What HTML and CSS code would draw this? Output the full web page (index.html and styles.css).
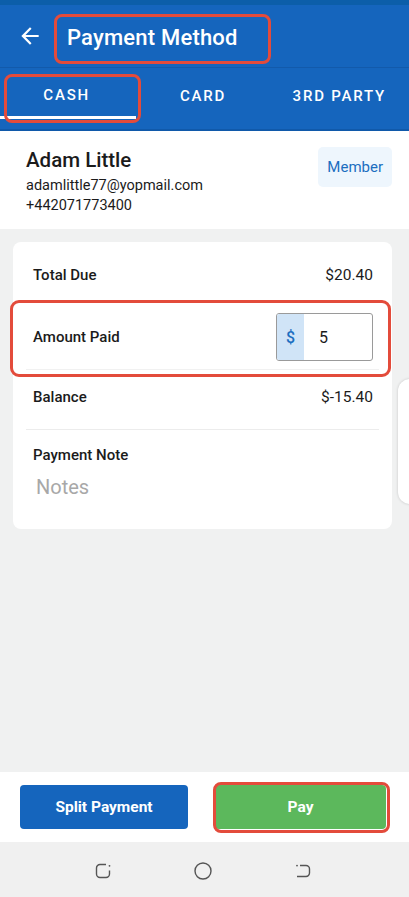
FILE: index.html
```html
<!DOCTYPE html>
<html>
<head>
    <meta charset="utf-8">
    <meta name="viewport" content="width=device-width, initial-scale=1">
    <title>Payment Method</title>
    <link rel="stylesheet" href="styles.css">
</head>
<body>
    <div class="screen">
        <div class="status-bar"></div>

        <header class="app-bar">
            <svg class="back-icon" width="26" height="26" viewBox="0 0 24 24"><path d="M20 11H7.83l5.59-5.59L12 4l-8 8 8 8 1.41-1.41L7.83 13H20v-2z" fill="#fff"/></svg>
            <h1 class="title">Payment Method</h1>
            <span class="mark mark-title"></span>
        </header>

        <nav class="tabs">
            <div class="tab -active">Cash</div>
            <div class="tab">Card</div>
            <div class="tab">3rd Party</div>
            <span class="mark mark-tab"></span>
        </nav>

        <section class="customer">
            <div class="customer-info">
                <div class="customer-name">Adam Little</div>
                <div class="customer-line">adamlittle77@yopmail.com</div>
                <div class="customer-line">+442071773400</div>
            </div>
            <span class="badge">Member</span>
        </section>

        <main class="content">
            <div class="card">
                <div class="row row-total">
                    <span class="label">Total Due</span>
                    <span class="value">$20.40</span>
                </div>
                <div class="row row-amount">
                    <span class="label">Amount Paid</span>
                    <div class="amount-input">
                        <span class="currency">$</span>
                        <span class="amount-value">5</span>
                    </div>
                    <span class="mark mark-amount"></span>
                </div>
                <div class="row row-balance">
                    <span class="label">Balance</span>
                    <span class="value">$-15.40</span>
                </div>
                <div class="note">
                    <div class="label">Payment Note</div>
                    <div class="note-placeholder">Notes</div>
                </div>
            </div>
            <div class="side-sheet"></div>
        </main>

        <footer class="actions">
            <button class="btn btn-split">Split Payment</button>
            <button class="btn btn-pay">Pay</button>
            <span class="mark mark-pay"></span>
        </footer>

        <div class="nav-bar">
            <svg width="20" height="20" viewBox="0 0 20 20"><path d="M13 3.5H7A3.5 3.5 0 0 0 3.5 7v6A3.5 3.5 0 0 0 7 16.5h6a3.5 3.5 0 0 0 3.5-3.5V9.5" fill="none" stroke="#555" stroke-width="1.4"/><circle cx="16.5" cy="4.8" r="0.9" fill="#555"/></svg>
            <svg width="20" height="20" viewBox="0 0 20 20"><circle cx="10" cy="10" r="8" fill="none" stroke="#555" stroke-width="1.4"/></svg>
            <svg width="20" height="20" viewBox="0 0 20 20"><path d="M7 4.5h6a3.5 3.5 0 0 1 3.5 3.5v4a3.5 3.5 0 0 1-3.5 3.5H4" fill="none" stroke="#555" stroke-width="1.4"/><circle cx="4" cy="4.6" r="0.9" fill="#555"/></svg>
        </div>
    </div>
</body>
</html>
```

FILE: styles.css
```css
* { box-sizing: border-box; margin: 0; }

body { margin: 0; }

:root {
    --primary-color: #1565bd;
    --mark-color: #e34b3b;
    --background-color: #f0f1f1;
    font-family: Roboto, "Noto Sans", sans-serif;
    color: #1b1b1b;
}

.screen {
    display: flex;
    flex-direction: column;
    height: 897px;
    background-color: var(--background-color);
    position: relative;
    overflow: hidden;
}

.status-bar {
    height: 5px;
    background-color: #0c5ea9;
}

.app-bar {
    position: relative;
    display: flex;
    align-items: center;
    height: 63px;
    padding-left: 17px;
    gap: 24px;
    background-color: var(--primary-color);
    border-bottom: 1px solid #125aab;
}

.title {
    color: #fff;
    font-size: 22px;
    font-weight: 500;
    letter-spacing: .2px;
    padding-top: 2px;
}

.tabs {
    position: relative;
    display: grid;
    grid-template-columns: repeat(3, 1fr);
    height: 63px;
    padding-bottom: 10px;
    background-color: var(--primary-color);
    border-bottom: 2px solid #1059aa;
}

.tab {
    display: flex;
    align-items: center;
    justify-content: center;
    color: #fff;
    font-size: 15px;
    font-weight: 500;
    letter-spacing: 1.8px;
    text-transform: uppercase;
    padding-top: 5px;
    padding-right: 3px;
}

.tab.-active {
    border-bottom: 3px solid #fff;
}

.customer {
    display: flex;
    justify-content: space-between;
    align-items: flex-start;
    background-color: #fff;
    padding: 17px 17px 0 26px;
    height: 98px;
}

.customer-name {
    font-size: 20.5px;
    font-weight: 500;
    line-height: 24px;
    margin-bottom: 4px;
}

.customer-line {
    font-size: 14.5px;
    line-height: 20px;
}

.badge {
    margin-top: -1px;
    padding: 11px 9px;
    background-color: #eef6fd;
    color: #1c6ec0;
    font-size: 15px;
    border-radius: 5px;
}

.content {
    position: relative;
    flex: 1;
    padding: 13px 17px 0 13px;
}

.card {
    background-color: #fff;
    border-radius: 8px;
    padding-top: 2px;
}

.row {
    position: relative;
    display: flex;
    justify-content: space-between;
    align-items: center;
    padding: 0 19px 0 20px;
}

.label {
    font-size: 15px;
    font-weight: 500;
}

.value {
    font-size: 15.5px;
}

.row-total {
    height: 61px;
}

.row-amount {
    height: 65px;
    padding-bottom: 1px;
}

.row-amount::after {
    content: "";
    position: absolute;
    left: 13px;
    right: 13px;
    bottom: 0;
    border-bottom: 1px solid #f1f1f1;
}

.row-balance {
    height: 60px;
    padding-bottom: 6px;
    border-bottom: 1px solid #ececec;
    margin: 0 13px;
    padding-left: 7px;
    padding-right: 6px;
}

.amount-input {
    display: flex;
    width: 97px;
    height: 48px;
    border: 1px solid #9a9a9a;
    border-radius: 3px;
    overflow: hidden;
}

.currency {
    display: flex;
    align-items: center;
    justify-content: center;
    width: 27px;
    background-color: #d0e4f7;
    color: #1c6ec0;
    font-size: 16px;
    font-weight: 500;
}

.amount-value {
    display: flex;
    align-items: center;
    padding-left: 15px;
    font-size: 16px;
}

.note {
    padding: 15px 20px 30px;
}

.note .label {
    line-height: 20px;
}

.note-placeholder {
    margin-top: 10px;
    padding-left: 3px;
    font-size: 20px;
    line-height: 24px;
    color: #a8a8a8;
}

.side-sheet {
    position: absolute;
    top: 150px;
    left: 398px;
    width: 40px;
    height: 125px;
    background-color: #fff;
    border-radius: 12px;
    box-shadow: 0 0 3px rgba(0, 0, 0, .18);
}

.actions {
    position: relative;
    display: grid;
    grid-template-columns: 168px 171px;
    justify-content: space-between;
    align-items: center;
    height: 70px;
    padding: 0 23px 0 20px;
    background-color: #fff;
}

.btn {
    height: 44px;
    border: none;
    border-radius: 4px;
    color: #fff;
    font-family: inherit;
    font-size: 15.5px;
    font-weight: 700;
}

.btn-split {
    background-color: var(--primary-color);
}

.btn-pay {
    background-color: #5cb85c;
}

.nav-bar {
    display: flex;
    justify-content: center;
    align-items: center;
    gap: 80px;
    height: 55px;
    background-color: #f0f0f0;
    padding: 2px 4px 0 0;
}

/* annotation outlines drawn over the screenshot */
.mark {
    position: absolute;
    border: 3px solid var(--mark-color);
    border-radius: 8px;
    pointer-events: none;
}

.mark-title { left: 54px; top: 9px; width: 217px; height: 50px; }

.mark-tab { left: 4px; top: 6px; width: 137px; height: 49px; }

.mark-amount { left: -3px; top: -5px; width: 381px; height: 77px; border-radius: 9px; }

.mark-pay { left: 213px; top: 10px; width: 177px; height: 51px; }
```
